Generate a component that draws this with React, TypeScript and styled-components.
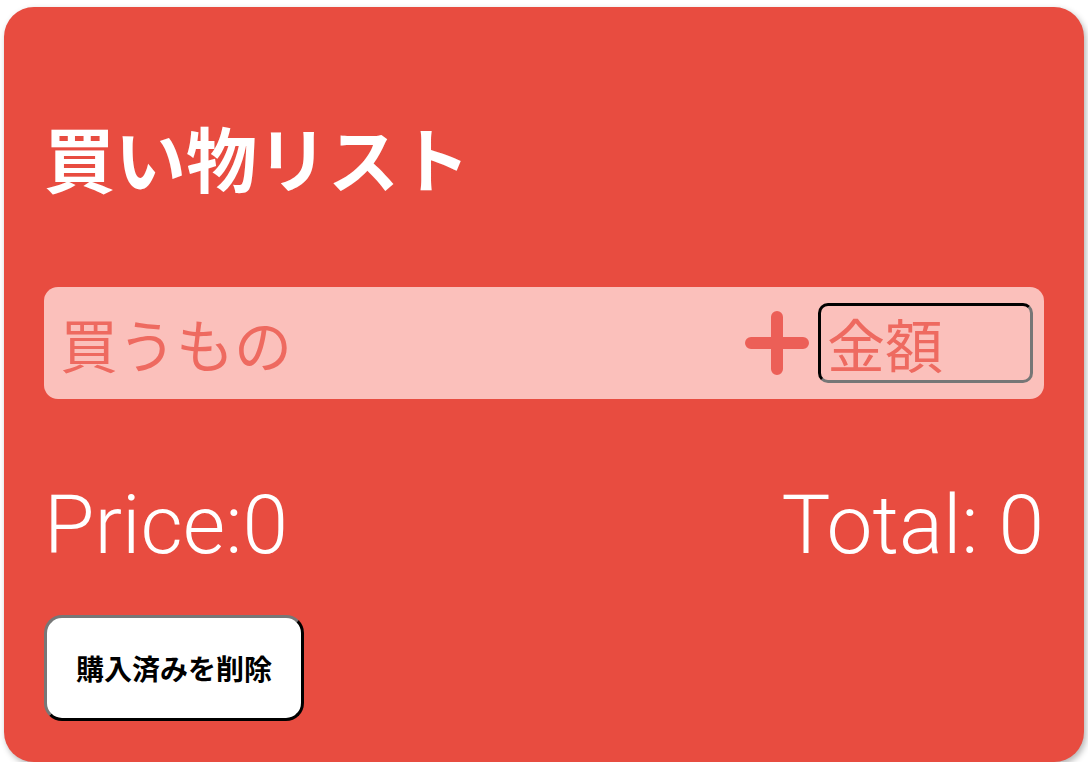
import React from "react";
import styled, { createGlobalStyle } from "styled-components";

const Global = createGlobalStyle`
  html, body { margin: 0; padding: 0; background: #ffffff; }
  body { font-family: "Noto Sans CJK JP", "Noto Sans", sans-serif; }
`;

const Card = styled.div`
  box-sizing: border-box;
  margin: 7px 4px 0 4px;
  width: 1080px;
  height: 755px;
  background: #e84c40;
  border-radius: 30px;
  box-shadow: 2px 3px 6px rgba(0, 0, 0, 0.3);
  padding: 0 40px;
  display: flex;
  flex-direction: column;
  color: #ffffff;
`;

const Title = styled.h1`
  margin: 99px 0 0 0;
  font-size: 71px;
  font-weight: 700;
  line-height: 100px;
  letter-spacing: 0;
`;

const InputBar = styled.div`
  margin-top: 81px;
  height: 112px;
  background: #fbc0bb;
  border-radius: 14px;
  display: flex;
  align-items: center;
  padding: 0 11px 0 12px;
  box-sizing: border-box;
`;

const ItemInput = styled.input`
  flex: 1;
  min-width: 0;
  background: transparent;
  border: none;
  outline: none;
  padding: 0 4px;
  font-family: "Noto Sans CJK JP", sans-serif;
  font-size: 58px;
  font-weight: 400;
  color: #333;
  &::placeholder { color: #ee6a60; }
`;

const AddButton = styled.button`
  width: 66px;
  height: 66px;
  background: transparent;
  border: none;
  padding: 0;
  margin-right: 8px;
  display: flex;
  align-items: center;
  justify-content: center;
  cursor: pointer;
`;

const AmountInput = styled.input`
  box-sizing: border-box;
  width: 215px;
  height: 80px;
  background: transparent;
  border: 3px inset #767676;
  border-top-color: #222;
  border-left-color: #222;
  border-radius: 10px;
  padding: 0 6px;
  font-family: "Noto Sans CJK JP", sans-serif;
  font-size: 58px;
  font-weight: 400;
  outline: none;
  &::placeholder { color: #ee6a60; }
`;

const Totals = styled.div`
  margin-top: 82px;
  display: flex;
  justify-content: space-between;
  align-items: baseline;
  font-family: Roboto, "Noto Sans", sans-serif;
  font-size: 82px;
  font-weight: 300;
  line-height: 88px;
`;

const Amount = styled.span``;

const ClearButton = styled.button`
  margin-top: 46px;
  align-self: flex-start;
  box-sizing: border-box;
  width: 260px;
  height: 106px;
  background: #ffffff;
  border: 3px outset #222;
  border-top-color: #777;
  border-left-color: #777;
  border-radius: 18px;
  font-family: "Noto Sans CJK JP", sans-serif;
  font-size: 28px;
  font-weight: 700;
  color: #000;
  cursor: pointer;
`;

const PlusIcon = () => (
  <svg width="64" height="64" viewBox="0 0 64 64">
    <path d="M32 6 V58 M6 32 H58" stroke="#ec5f57" strokeWidth="12" strokeLinecap="round" fill="none" />
  </svg>
);

export default function App() {
  return (
    <>
      <Global />
      <Card>
        <Title>買い物リスト</Title>
        <InputBar>
          <ItemInput placeholder="買うもの" />
          <AddButton aria-label="追加"><PlusIcon /></AddButton>
          <AmountInput placeholder="金額" />
        </InputBar>
        <Totals>
          <Amount>Price:0</Amount>
          <Amount>Total: 0</Amount>
        </Totals>
        <ClearButton>購入済みを削除</ClearButton>
      </Card>
    </>
  );
}
